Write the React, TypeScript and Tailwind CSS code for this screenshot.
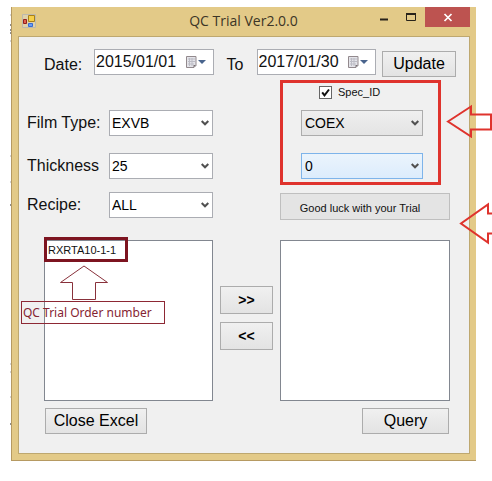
import type { ReactNode } from "react";

const button =
  "flex items-center justify-center border border-[#acacac] bg-linear-to-b from-[#f0f0f0] to-[#e3e3e3] whitespace-nowrap text-black";

function Calendar() {
  return (
    <svg viewBox="0 0 22 14" className="h-[14px] w-[22px]" aria-hidden="true">
      <path d="M1.5 1.5h9.5v9l-2 2h-7.5z" fill="#e4e4e9" stroke="#92898d" />
      <path d="M3 4h7M3 6.5h7M3 9h6M4.5 3v8M7 3v8" stroke="#bcbcc5" />
      <path d="M11 10l-2.5 2.5V10z" fill="#776f72" />
      <path d="M13 5h8l-4 4z" fill="#49648d" />
    </svg>
  );
}

function DateBox({ id, value }: { id: string; value: string }) {
  return (
    <div className="flex h-[26px] min-w-0 flex-1 items-center border border-[#abadb3] bg-white pr-[6px]">
      <input id={id} defaultValue={value} className="h-full w-full min-w-0 pl-px text-base outline-none" />
      <button aria-label="Open calendar" className="shrink-0">
        <Calendar />
      </button>
    </div>
  );
}

function Select({ id, value, tone, label }: { id: string; value: string; tone: string; label?: string }) {
  return (
    <div className="relative min-w-0 flex-1">
      <select
        id={id}
        aria-label={label}
        defaultValue={value}
        className={`block h-[26px] w-full appearance-none border pb-px text-sm text-black outline-none ${tone}`}
      >
        <option>{value}</option>
      </select>
      <svg viewBox="0 0 8 6" className="pointer-events-none absolute top-[10px] right-[4px] h-[6px] w-2" aria-hidden="true">
        <path d="M.7 1L4 4.3 7.3 1" fill="none" stroke="#505050" strokeWidth="2" />
      </svg>
    </div>
  );
}

function Field({ id, label, value }: { id: string; label: string; value: string }) {
  return (
    <div className="flex items-center">
      <label htmlFor={id} className="w-[82px] shrink-0 whitespace-nowrap">
        {label}
      </label>
      <Select id={id} value={value} tone="border-[#abadb3] bg-white pl-[2px]" />
    </div>
  );
}

function ListBox({ label, children }: { label: string; children?: ReactNode }) {
  return (
    <ul aria-label={label} className="relative h-[161px] border border-[#828790] bg-white">
      {children}
    </ul>
  );
}

function TitleBar() {
  return (
    <header className="flex h-[29px] items-start">
      <svg viewBox="0 0 14 14" className="mt-[7px] ml-1 h-[14px] w-[14px]" aria-hidden="true">
        <path d="M.5.5h13v13H.5z" fill="#dfd1aa" stroke="#bcb9ad" />
        <path d="M6.5 1.5h6v6h-6z" fill="#f6cf48" stroke="#a88019" />
        <path d="M1.5 5.5h3v4h-3z" fill="#df5f4d" stroke="#94201a" />
        <path d="M6.5 9.5h4v3h-4z" fill="#6a9cf2" stroke="#386bd1" />
      </svg>
      <h1 className="flex-1 pt-1 pl-20 text-center font-['Open_Sans',sans-serif] text-sm leading-5 whitespace-nowrap text-[#3c3526]">
        QC Trial Ver2.0.0
      </h1>
      <div className="flex h-5">
        <button aria-label="Minimize" className="w-[27px]">
          <svg viewBox="0 0 27 20" className="block" aria-hidden="true">
            <path d="M9 12.5h8" stroke="#28231a" strokeWidth="2" />
          </svg>
        </button>
        <button aria-label="Maximize" className="w-[27px]">
          <svg viewBox="0 0 27 20" className="block" aria-hidden="true">
            <path d="M8.5 6.5h9v7h-9z" fill="none" stroke="#28231a" />
            <path d="M8 7h10" stroke="#28231a" strokeWidth="2" />
          </svg>
        </button>
        <button aria-label="Close" className="w-[45px] bg-[#bd5350]">
          <svg viewBox="0 0 45 20" className="block" aria-hidden="true">
            <path d="M19.5 7l7 7m0-7l-7 7" stroke="#fff" strokeWidth="1.7" />
          </svg>
        </button>
      </div>
    </header>
  );
}

export default function App() {
  return (
    <div className="relative overflow-hidden bg-white pt-[7px] pr-4 pb-5 pl-[11px] font-['Liberation_Sans',Arial,sans-serif] text-base leading-5 text-[#111]">
      <svg viewBox="0 0 1 460" className="absolute top-0 left-[10px] h-[460px] w-px" aria-hidden="true">
        <path d="M0 15h1M0 41h1M0 156h1M0 182h1M0 364h1M0 372h1M0 397h1" stroke="#aaa" />
        <path d="M0 25h1M0 30h1M0 33h1M0 205h1M0 424h1" stroke="#222" />
      </svg>

      <main className="border-b border-l border-[#b69a62] bg-[#e3ca88] pr-[6px] pb-[6px] pl-[6px]">
        <TitleBar />
        <div className="border border-[#bea870] bg-[#f0f0f0] pt-3 pb-[19px]">
          <div className="flex pr-[13px] pl-[25px]">
            <label htmlFor="from" className="w-[50px] pt-[6px]">
              Date:
            </label>
            <DateBox id="from" value="2015/01/01" />
            <label htmlFor="to" className="w-[43px] pt-[6px] pl-[13px]">
              To
            </label>
            <DateBox id="to" value="2017/01/30" />
            <button className={`${button} mt-[2px] ml-[6px] h-[26px] w-[74px]`}>Update</button>
          </div>

          <div className="grid grid-cols-[186fr_67px_170fr] pt-[3px] pr-[19px] pl-2">
            <div className="flex flex-col gap-[13px] pt-[30px]">
              <div className="flex flex-col gap-[17px]">
                <Field id="film" label="Film Type:" value="EXVB" />
                <Field id="thickness" label="Thickness" value="25" />
              </div>
              <Field id="recipe" label="Recipe:" value="ALL" />
            </div>
            <div className="col-start-3 flex flex-col gap-2">
              <div className="mr-[9px] flex flex-col border-[3px] border-[#df332d] pt-[2px] pr-[15px] pb-[3px] pl-[18px]">
                <label className="mb-[10px] flex items-center gap-[6px] pl-[18px] text-[11px] leading-[15px]">
                  <span className="relative flex">
                    <input
                      type="checkbox"
                      defaultChecked
                      className="peer h-[13px] w-[13px] appearance-none border border-[#666] bg-white"
                    />
                    <svg viewBox="0 0 13 13" className="pointer-events-none absolute inset-0 hidden peer-checked:block" aria-hidden="true">
                      <path d="M3.2 6.3l2.3 3L10 3.5" fill="none" stroke="#111" strokeWidth="2" />
                    </svg>
                  </span>
                  Spec_ID
                </label>
                <div className="flex flex-col gap-[17px]">
                  <div className="flex">
                    <Select
                      id="spec"
                      label="Spec type"
                      value="COEX"
                      tone="border-[#acacac] bg-linear-to-b from-[#efefef] to-[#e4e4e4] pl-[3px]"
                    />
                  </div>
                  <div className="flex">
                    <Select
                      id="number"
                      label="Spec number"
                      value="0"
                      tone="border-[#7eb4ea] bg-linear-to-b from-[#ebf4fc] to-[#dcecfc] pl-[3px]"
                    />
                  </div>
                </div>
              </div>
              <button className="flex h-[27px] items-center justify-center border border-[#bfbfbf] bg-[#e4e4e4] pt-[2px] pr-[10px] text-[11px] whitespace-nowrap">
                Good luck with your Trial
              </button>
            </div>
          </div>

          <div className="grid grid-cols-[169fr_67px_170fr] pt-5 pr-[19px] pl-[25px]">
            <ListBox label="Orders">
              <li className="px-[3px] pt-[2px] text-[11px] leading-[14px]">RXRTA10-1-1</li>
              <li aria-hidden="true" className="absolute top-[-4px] left-[-1px] h-[25px] w-[84px] border-[3px] border-[#7d1420]" />
              <li className="absolute top-[24px] left-[-24px] flex w-[144px] flex-col">
                <svg viewBox="0 0 50 36" className="ml-[38px] h-9 w-[50px]" aria-hidden="true">
                  <path d="M25 1L48.5 17.5H36.5V34.5H13.5V17.5H1.5z" fill="none" stroke="#89313b" />
                </svg>
                <span className="border border-[#8d2834] pl-px font-['Noto_Sans',sans-serif] text-xs leading-[21px] whitespace-nowrap text-[#852432]">
                  QC Trial Order number
                </span>
              </li>
            </ListBox>
            <div className="flex flex-col gap-2 px-[7px] pt-[46px] text-sm font-bold">
              <button aria-label="Add to selection" className={`${button} h-7`}>
                &gt;&gt;
              </button>
              <button aria-label="Remove from selection" className={`${button} h-7`}>
                &lt;&lt;
              </button>
            </div>
            <ListBox label="Selected orders" />
          </div>

          <div className="flex justify-between pt-[7px] pr-[20px] pl-[26px]">
            <button className={`${button} h-[26px] w-[102px]`}>Close Excel</button>
            <button className={`${button} h-[26px] w-[87px]`}>Query</button>
          </div>
        </div>
      </main>

      <svg viewBox="0 0 46 34" className="absolute top-[104px] right-0 h-[34px] w-[46px]" aria-hidden="true">
        <path d="M2 17.5L25 2.5V10.5H45V25.5H25V32.5z" fill="none" stroke="#df332d" strokeWidth="2" />
      </svg>
      <svg viewBox="0 0 33 44" className="absolute top-[202px] right-0 h-11 w-[33px]" aria-hidden="true">
        <path d="M33 11.5H29V2.5L2 21.5 29 40.5V31.5H33" fill="none" stroke="#df332d" strokeWidth="2" />
      </svg>
    </div>
  );
}
